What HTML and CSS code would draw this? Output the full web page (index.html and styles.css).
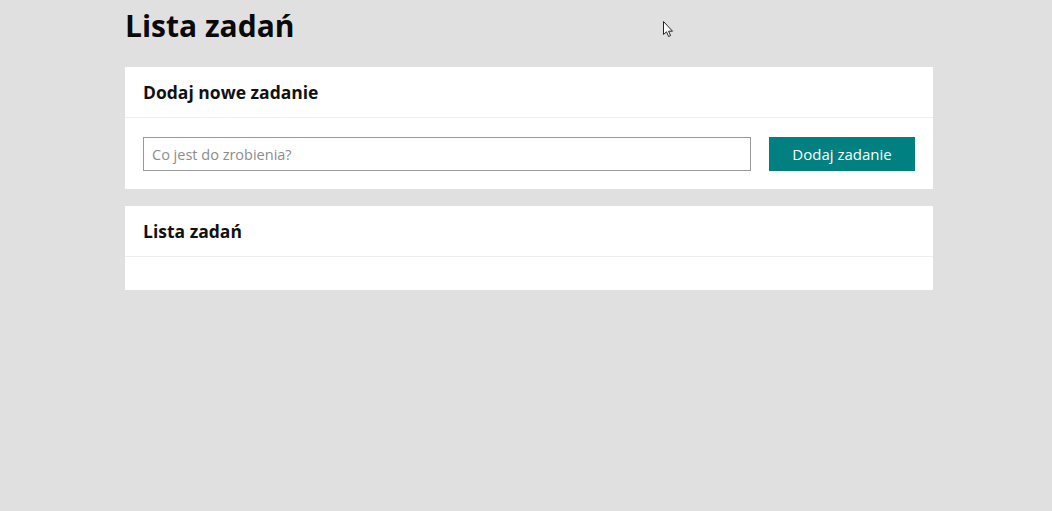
FILE: index.html
```
<!DOCTYPE html>
<html lang="pl">
<head>
<meta charset="utf-8">
<title>Lista zadań</title>
<link rel="stylesheet" href="styles.css">
</head>
<body>
<div class="page">
  <h1 class="title">Lista zadań</h1>
  <section class="card">
    <div class="card-header"><h2 class="card-title">Dodaj nowe zadanie</h2></div>
    <div class="card-body form-row">
      <input class="task-input" type="text" placeholder="Co jest do zrobienia?">
      <button class="add-btn" type="button">Dodaj zadanie</button>
    </div>
  </section>
  <section class="card">
    <div class="card-header"><h2 class="card-title">Lista zadań</h2></div>
    <div class="card-body list-body"><ul class="task-list"></ul></div>
  </section>
</div>
<svg class="cursor" width="12" height="18" viewBox="0 0 12 18" aria-hidden="true">
  <path d="M0.5 0.5 L0.5 13.5 L3.5 10.8 L5.6 15.5 L7.6 14.6 L5.6 10.2 L9.5 10.2 Z" fill="#fff" stroke="#222" stroke-width="1" stroke-linejoin="miter"/>
</svg>
</body>
</html>
```
FILE: styles.css
```
html, body {
  margin: 0;
  padding: 0;
  background: #e0e0e0;
  font-family: "Open Sans", "Liberation Sans", sans-serif;
  color: #111;
}
.page {
  width: 808px;
  margin: 0 auto 0 125px;
  padding-top: 8px;
}
.title {
  margin: 0 0 23px 0;
  font-size: 30px;
  line-height: 36px;
  font-weight: 700;
  color: #0a0a0a;
}
.card {
  background: #fff;
  margin-bottom: 17px;
}
.card-header {
  padding: 14px 18px;
  border-bottom: 1px solid #eeeeee;
}
.card-title {
  margin: 0;
  font-size: 17.5px;
  line-height: 22px;
  font-weight: 700;
  color: #111;
}
.card-body {
  padding: 18px 18px;
}
.form-row {
  display: flex;
  gap: 18px;
  padding-top: 19px;
  padding-bottom: 18px;
}
.task-input {
  flex: 1;
  height: 34px;
  box-sizing: border-box;
  border: 1px solid #9a9a9a;
  border-radius: 0;
  padding: 0 8px;
  font-family: inherit;
  font-size: 14.5px;
  color: #333;
  outline: none;
}
.task-input::placeholder {
  color: #8c8c8c;
}
.add-btn {
  width: 146px;
  height: 34px;
  border: 0;
  background: #008080;
  color: #fff;
  font-family: inherit;
  font-size: 15px;
  padding: 0;
}
.list-body {
  padding: 16px 18px 17px;
}
.task-list {
  margin: 0;
  padding: 0;
  list-style: none;
}
.cursor {
  position: absolute;
  left: 663px;
  top: 21px;
}
```
